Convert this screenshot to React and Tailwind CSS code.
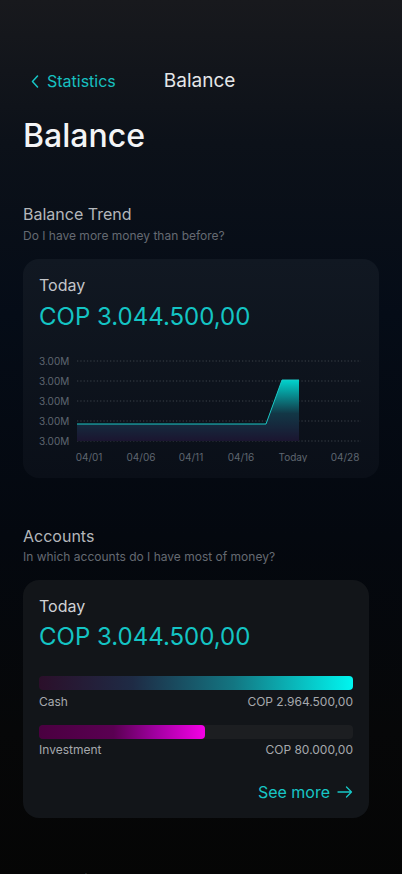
import React from 'react';

const ticks = [11, 31, 51, 71, 91];
const dates = [
  { x: 50, t: '04/01' },
  { x: 102, t: '04/06' },
  { x: 152, t: '04/11' },
  { x: 202, t: '04/16' },
  { x: 254, t: 'Today' },
  { x: 306, t: '04/28' },
];

function TrendChart() {
  return (
    <svg width="323" height="112" viewBox="0 0 323 112" className="block">
      <defs>
        <linearGradient id="area" x1="0" y1="30" x2="0" y2="91" gradientUnits="userSpaceOnUse">
          <stop offset="0" stopColor="#00d3cd" />
          <stop offset="0.55" stopColor="#123746" />
          <stop offset="1" stopColor="#1b1530" />
        </linearGradient>
      </defs>
      {ticks.map((y) => (
        <g key={y}>
          <text x="0" y={y + 3.5} fontSize="10" fill="#5f6670">3.00M</text>
          <line x1="38" y1={y} x2="322" y2={y} stroke="#3a4048" strokeWidth="1" strokeDasharray="1.3 2" />
        </g>
      ))}
      <path d="M38 74 L227 74 L243 30 L260 30 L260 91 L38 91 Z" fill="url(#area)" />
      <path d="M38 74 L227 74 L243 30 L260 30" fill="none" stroke="#1bc9c6" strokeWidth="1" />
      {dates.map((d) => (
        <text key={d.t} x={d.x} y="111" fontSize="10" fill="#5f6670" textAnchor="middle">{d.t}</text>
      ))}
    </svg>
  );
}

export default function App() {
  return (
    <div
      className="min-h-[874px] w-[402px] overflow-hidden bg-[linear-gradient(180deg,#18191d_0%,#0c1119_16%,#050c17_35%,#04080f_60%,#060708_82%,#050505_100%)] text-white"
      style={{ fontFamily: 'Inter, "Noto Sans", sans-serif' }}
    >
      {/* nav */}
      <div className="flex items-center pt-[69px] pl-[31px]">
        <svg width="8" height="13" viewBox="0 0 8 13" className="text-[#17c6c6]">
          <path d="M6.5 1 L1.5 6.5 L6.5 12" fill="none" stroke="currentColor" strokeWidth="1.5" strokeLinecap="round" strokeLinejoin="round" />
        </svg>
        <span className="ml-[8px] text-[16px] leading-6 text-[#17c0c0]">Statistics</span>
        <span className="ml-[48px] text-[19px] leading-6 text-[#e4e6e8]">Balance</span>
      </div>

      <div className="px-[23px]">
        <h1 className="mt-[23px] text-[32px] font-medium leading-10 text-[#f3f4f6]">Balance</h1>

        <h2 className="mt-[46px] text-[16px] leading-6 text-[#b4b7bb]">Balance Trend</h2>
        <p className="mt-[2px] text-[12px] leading-4 text-[#656a72]">Do I have more money than before?</p>

        <div className="mt-[15px] w-[356px] rounded-2xl bg-[linear-gradient(180deg,#111822,#0a0f18)] px-4 pt-[14px] pb-4">
          <div className="text-[16px] leading-6 text-[#c3c5c9]">Today</div>
          <div className="mt-1 text-[24px] leading-8 text-[#14c4c4]">COP 3.044.500,00</div>
          <div className="mt-[17px] -ml-[0px]">
            <TrendChart />
          </div>
        </div>

        <h2 className="mt-[46px] text-[16px] leading-6 text-[#b4b7bb]">Accounts</h2>
        <p className="mt-[1px] text-[12px] leading-4 text-[#656a72]">In which accounts do I have most of money?</p>

        <div className="mt-[15px] w-[346px] rounded-2xl bg-[#121519] px-4 pt-[14px] pb-[14px]">
          <div className="text-[16px] leading-6 text-[#d0d2d5]">Today</div>
          <div className="mt-[3px] text-[24px] leading-8 text-[#14c4c4]">COP 3.044.500,00</div>

          <div className="mt-[23px] h-[14px] w-full rounded bg-[linear-gradient(90deg,#2b0f2a_0%,#1e2b45_30%,#137682_62%,#00f6f0_100%)]" />
          <div className="mt-1 flex justify-between text-[12px] leading-4 text-[#a6a9ad]">
            <span>Cash</span>
            <span>COP 2.964.500,00</span>
          </div>

          <div className="mt-[15px] h-[14px] w-full rounded bg-[#1c1e21]">
            <div className="h-full w-[53%] rounded bg-[linear-gradient(90deg,#4a0040_0%,#5a0052_45%,#a000a0_70%,#f500e6_100%)]" />
          </div>
          <div className="mt-[3px] flex justify-between text-[12px] leading-4 text-[#a6a9ad]">
            <span>Investment</span>
            <span>COP 80.000,00</span>
          </div>

          <div className="mt-[22px] flex items-center justify-end gap-[7px] text-[16px] leading-6 text-[#17c6c6]">
            <span>See more</span>
            <svg width="16" height="12" viewBox="0 0 16 12">
              <path d="M1 6 H14.5 M9.5 1 L14.5 6 L9.5 11" fill="none" stroke="currentColor" strokeWidth="1.3" strokeLinecap="round" strokeLinejoin="round" />
            </svg>
          </div>
        </div>

        <h2 className="mt-[50px] text-[16px] leading-6 text-[#b4b7bb]">Currencies</h2>
      </div>
    </div>
  );
}
